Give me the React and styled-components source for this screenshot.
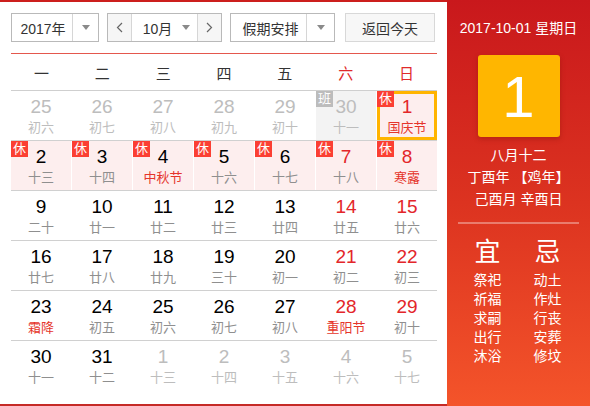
import React from "react";
import styled, { createGlobalStyle, css } from "styled-components";

const Global = createGlobalStyle`
  html, body { margin: 0; padding: 0; background: #fff; }
  body { font-family: "Liberation Sans", "Noto Sans CJK SC", sans-serif; }
  * { box-sizing: border-box; }
`;

const Wrap = styled.div`
  display: flex;
  width: 590px;
  height: 406px;
  overflow: hidden;
`;

const Left = styled.div`
  width: 447px;
  height: 406px;
  border-top: 2px solid #cc1f1d;
  border-bottom: 2px solid #c52a26;
  padding: 11px 10px 0 11px;
  background: #fff;
`;

const Toolbar = styled.div`
  display: flex;
  align-items: center;
  height: 29px;
`;

const Box = styled.div`
  display: flex;
  height: 29px;
  border: 1px solid #b9b9b9;
  background: #fff;
  margin-right: ${(p) => p.$mr || 0}px;
  width: ${(p) => p.$w}px;
`;

const SelText = styled.div`
  flex: 1;
  display: flex;
  align-items: center;
  justify-content: center;
  font-size: 14px;
  color: #333;
  padding-left: ${(p) => p.$pl || 0}px;
`;

const ArrowCell = styled.div`
  width: ${(p) => p.$w || 26}px;
  border-left: 1px solid #d6d6d6;
  display: flex;
  align-items: center;
  justify-content: center;
`;

const Tri = styled.span`
  width: 0;
  height: 0;
  border-left: 4px solid transparent;
  border-right: 4px solid transparent;
  border-top: 5px solid #8a8a8a;
  margin-left: ${(p) => p.$ml || 0}px;
`;

const NavBtn = styled.div`
  width: 24px;
  display: flex;
  align-items: center;
  justify-content: center;
  background: #f6f6f6;
  ${(p) =>
    p.$side === "left"
      ? css`border-right: 1px solid #d6d6d6;`
      : css`border-left: 1px solid #d6d6d6;`}
`;

const MonthMid = styled.div`
  flex: 1;
  display: flex;
  align-items: center;
  justify-content: center;
  gap: 10px;
  font-size: 14px;
  color: #333;
  padding-left: 4px;
`;

const ReturnBtn = styled.div`
  width: 90px;
  height: 29px;
  border: 1px solid #d8d8d8;
  background: #f7f7f7;
  display: flex;
  align-items: center;
  justify-content: center;
  font-size: 14px;
  color: #333;
`;

const Grid = styled.div`
  margin-top: 11px;
  width: 426px;
  border-top: 1px solid #e4574d;
`;

const Head = styled.div`
  display: grid;
  grid-template-columns: repeat(7, 1fr);
  height: 37px;
  border-bottom: 1px solid #cfcfcf;
`;

const HeadCell = styled.div`
  display: flex;
  align-items: center;
  justify-content: center;
  font-size: 15px;
  color: ${(p) => (p.$red ? "#e02a2a" : "#333")};
`;

const Row = styled.div`
  display: grid;
  grid-template-columns: repeat(7, 1fr);
  column-gap: 1px;
  height: 50px;
  border-bottom: ${(p) => (p.$last ? "none" : "1px solid #d0d0d0")};
`;

const Cell = styled.div`
  position: relative;
  height: 49px;
  padding-top: 5px;
  text-align: center;
  background: ${(p) => (p.$bg === "rest" ? "#fdeeee" : p.$bg === "work" ? "#f3f3f3" : "#fff")};
  ${(p) =>
    p.$today &&
    css`
      box-shadow: inset 0 0 0 3px #ffb400;
    `}
`;

const Num = styled.div`
  font-size: 19px;
  line-height: 22px;
  color: ${(p) => p.$c};
`;

const Lunar = styled.div`
  font-size: 13px;
  line-height: 20px;
  color: ${(p) => p.$c};
`;

const Badge = styled.span`
  position: absolute;
  top: 0;
  left: 0;
  width: 17px;
  height: 16px;
  line-height: 16px;
  font-size: 13px;
  text-align: center;
  color: #fff;
  background: ${(p) => (p.$work ? "#bcbcbc" : "#fb3f33")};
  z-index: 1;
`;

const Right = styled.div`
  flex: 1;
  height: 406px;
  background: linear-gradient(180deg, #c9181c 0%, #dc3320 50%, #f4542a 100%);
  color: #fff;
  display: flex;
  flex-direction: column;
  align-items: center;
  padding-top: 18px;
`;

const DateLine = styled.div`
  font-size: 14px;
  line-height: 20px;
`;

const BigDay = styled.div`
  margin-top: 17px;
  width: 82px;
  height: 82px;
  border-radius: 3px;
  background: #ffb600;
  box-shadow: 0 2px 5px rgba(120, 20, 0, 0.35);
  display: flex;
  align-items: center;
  justify-content: center;
  font-size: 58px;
  color: #fff;
`;

const LunarInfo = styled.div`
  margin-top: 7px;
  font-size: 14px;
  line-height: 22px;
  text-align: center;
`;

const Sep = styled.div`
  margin-top: 12px;
  width: 121px;
  height: 2px;
  background: rgba(255, 255, 255, 0.35);
`;

const YiJi = styled.div`
  margin-top: 12px;
  display: grid;
  grid-template-columns: 60px 60px;
  justify-content: center;
  width: 100%;
  padding-right: 2px;
`;

const Col = styled.div`
  display: flex;
  flex-direction: column;
  align-items: center;
`;

const YiTitle = styled.div`
  font-size: 26px;
  line-height: 32px;
  margin-bottom: 3px;
`;

const YiItem = styled.div`
  font-size: 14px;
  line-height: 19px;
`;

const weekdays = ["一", "二", "三", "四", "五", "六", "日"];

const rows = [
  [
    [25, "初六", "o"], [26, "初七", "o"], [27, "初八", "o"], [28, "初九", "o"], [29, "初十", "o"],
    [30, "十一", "o", { work: true }], [1, "国庆节", "c", { rest: true, today: true, fest: true }],
  ],
  [
    [2, "十三", "c", { rest: true }], [3, "十四", "c", { rest: true }], [4, "中秋节", "c", { rest: true, fest: true }],
    [5, "十六", "c", { rest: true }], [6, "十七", "c", { rest: true }], [7, "十八", "c", { rest: true }],
    [8, "寒露", "c", { rest: true, fest: true }],
  ],
  [[9, "二十", "c"], [10, "廿一", "c"], [11, "廿二", "c"], [12, "廿三", "c"], [13, "廿四", "c"], [14, "廿五", "c"], [15, "廿六", "c"]],
  [[16, "廿七", "c"], [17, "廿八", "c"], [18, "廿九", "c"], [19, "三十", "c"], [20, "初一", "c"], [21, "初二", "c"], [22, "初三", "c"]],
  [
    [23, "霜降", "c", { fest: true }], [24, "初五", "c"], [25, "初六", "c"], [26, "初七", "c"], [27, "初八", "c"],
    [28, "重阳节", "c", { fest: true }], [29, "初十", "c"],
  ],
  [[30, "十一", "c"], [31, "十二", "c"], [1, "十三", "o"], [2, "十四", "o"], [3, "十五", "o"], [4, "十六", "o"], [5, "十七", "o"]],
];

const Chevron = ({ dir }) => (
  <svg width="7" height="11" viewBox="0 0 7 11">
    <path
      d={dir === "left" ? "M6 1 L1.5 5.5 L6 10" : "M1 1 L5.5 5.5 L1 10"}
      fill="none"
      stroke="#666"
      strokeWidth="1.2"
    />
  </svg>
);

export default function App() {
  return (
    <>
      <Global />
      <Wrap>
        <Left>
          <Toolbar>
            <Box $w={88} $mr={8}>
              <SelText $pl={2}>2017年</SelText>
              <ArrowCell $w={26}><Tri /></ArrowCell>
            </Box>
            <Box $w={115} $mr={8}>
              <NavBtn $side="left"><Chevron dir="left" /></NavBtn>
              <MonthMid>10月<Tri /></MonthMid>
              <NavBtn $side="right"><Chevron dir="right" /></NavBtn>
            </Box>
            <Box $w={105} $mr={10}>
              <SelText $pl={4}>假期安排</SelText>
              <ArrowCell $w={28}><Tri /></ArrowCell>
            </Box>
            <ReturnBtn>返回今天</ReturnBtn>
          </Toolbar>
          <Grid>
            <Head>
              {weekdays.map((w, i) => (
                <HeadCell key={w} $red={i >= 5}>{w}</HeadCell>
              ))}
            </Head>
            {rows.map((r, ri) => (
              <Row key={ri} $last={ri === rows.length - 1}>
                {r.map(([n, l, m, f = {}], ci) => {
                  const other = m === "o";
                  const weekend = ci >= 5;
                  const numColor = other ? "#bdbdbd" : weekend ? "#e3262a" : "#000";
                  const lunarColor = f.fest ? "#e5352b" : other ? "#bdbdbd" : "#8f8f8f";
                  return (
                    <Cell key={ci} $bg={f.rest ? "rest" : f.work ? "work" : ""} $today={f.today}>
                      {f.rest && <Badge>休</Badge>}
                      {f.work && <Badge $work>班</Badge>}
                      <Num $c={numColor}>{n}</Num>
                      <Lunar $c={lunarColor}>{l}</Lunar>
                    </Cell>
                  );
                })}
              </Row>
            ))}
          </Grid>
        </Left>
        <Right>
          <DateLine>2017-10-01 星期日</DateLine>
          <BigDay>1</BigDay>
          <LunarInfo>
            八月十二<br />丁酉年 【鸡年】<br />己酉月 辛酉日
          </LunarInfo>
          <Sep />
          <YiJi>
            <Col>
              <YiTitle>宜</YiTitle>
              {["祭祀", "祈福", "求嗣", "出行", "沐浴"].map((t) => (
                <YiItem key={t}>{t}</YiItem>
              ))}
            </Col>
            <Col>
              <YiTitle>忌</YiTitle>
              {["动土", "作灶", "行丧", "安葬", "修坟"].map((t) => (
                <YiItem key={t}>{t}</YiItem>
              ))}
            </Col>
          </YiJi>
        </Right>
      </Wrap>
    </>
  );
}
